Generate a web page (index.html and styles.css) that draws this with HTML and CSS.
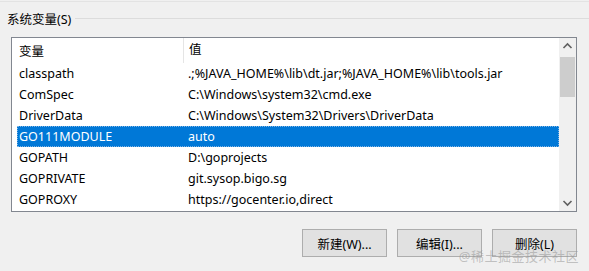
FILE: index.html
```html
<!DOCTYPE html>
<html lang="zh-CN">
<head>
    <meta charset="UTF-8">
    <title>系统变量</title>
<link rel="stylesheet" href="styles.css">
</head>
<body>
<div class="dialog">
    <div class="group-title"><span>系统变量(S)</span></div>
    <div class="listbox">
        <div class="list">
            <div class="row head"><span class="c1">变量</span><span class="c2">值</span></div>
            <div class="row"><span class="c1">classpath</span><span class="c2">.;%JAVA_HOME%\lib\dt.jar;%JAVA_HOME%\lib\tools.jar</span></div>
            <div class="row"><span class="c1">ComSpec</span><span class="c2">C:\Windows\system32\cmd.exe</span></div>
            <div class="row"><span class="c1">DriverData</span><span class="c2">C:\Windows\System32\Drivers\DriverData</span></div>
            <div class="row selected"><span class="c1">GO111MODULE</span><span class="c2">auto</span></div>
            <div class="row"><span class="c1">GOPATH</span><span class="c2">D:\goprojects</span></div>
            <div class="row"><span class="c1">GOPRIVATE</span><span class="c2">git.sysop.bigo.sg</span></div>
            <div class="row"><span class="c1">GOPROXY</span><span class="c2">https://gocenter.io,direct</span></div>
        </div>
        <div class="scrollbar">
            <svg class="arrow" width="17" height="17" viewBox="0 0 17 17"><path d="M4.5 10 L8.5 6 L12.5 10" fill="none" stroke="#606060" stroke-width="1.6"/></svg>
            <div class="track"><div class="thumb"></div></div>
            <svg class="arrow" width="17" height="17" viewBox="0 0 17 17"><path d="M4.5 7 L8.5 11 L12.5 7" fill="none" stroke="#606060" stroke-width="1.6"/></svg>
        </div>
    </div>
    <div class="buttons">
        <button>新建(W)...</button>
        <button>编辑(I)...</button>
        <button>删除(L)</button>
    </div>
    <div class="watermark">@稀土掘金技术社区</div>
</div>
</body>
</html>
```

FILE: styles.css
```css
html, body {
    margin: 0;
    width: 100%;
    height: 100%;
    background: #f0f0f0;
    font-family: "Noto Sans", "Noto Sans CJK SC", sans-serif;
    font-size: 12.5px;
    color: #000;
}
.dialog {
    position: relative;
    height: 271px;
    border-top: 1px solid #e3e3e3;
    margin-top: 1px;
    overflow: hidden;
}
.group-title {
    display: flex;
    align-items: center;
    height: 32px;
    padding-left: 7px;
}
.group-title::after {
    content: "";
    flex: 1;
    height: 1px;
    margin-left: 4px;
    margin-top: 1px;
    background: #dcdcdc;
}
.listbox {
    display: flex;
    margin: 3px 12px 0 11px;
    height: 173px;
    border: 1px solid #828790;
    background: #fff;
}
.list {
    flex: 1;
    padding: 0 0 0 5px;
}
.row {
    display: flex;
    height: 21px;
    align-items: center;
    white-space: nowrap;
    overflow: hidden;
}
.row.head {
    height: 25px;
}
.c1 {
    width: 164px;
    padding-left: 2px;
    flex: none;
}
.c2 {
    padding-left: 5px;
}
.head .c2 {
    border-left: 1px solid #e5e5e5;
    height: 25px;
    line-height: 24px;
}
.row.selected {
    background: #0078d7;
    color: #fff;
    outline: 1px dotted #7fb4e4;
    outline-offset: -1px;
}
.scrollbar {
    width: 17px;
    display: flex;
    flex-direction: column;
    background: #f0f0f0;
}
.arrow {
    display: block;
    flex: none;
}
.track {
    flex: 1;
    padding: 2px 1px 0;
}
.thumb {
    height: 40px;
    background: #cdcdcd;
}
.buttons {
    display: flex;
    justify-content: flex-end;
    gap: 10px;
    margin: 17px 12px 0 0;
}
.buttons button {
    width: 85px;
    height: 28px;
    background: #e1e1e1;
    border: 1px solid #adadad;
    font-family: "Noto Sans", "Noto Sans CJK SC", sans-serif;
    font-size: 12.5px;
    color: #000;
    padding: 0;
}
.watermark {
    position: absolute;
    right: 10px;
    bottom: 8px;
    font-size: 13px;
    color: rgba(150, 150, 150, 0.55);
    letter-spacing: 0.5px;
}
```
